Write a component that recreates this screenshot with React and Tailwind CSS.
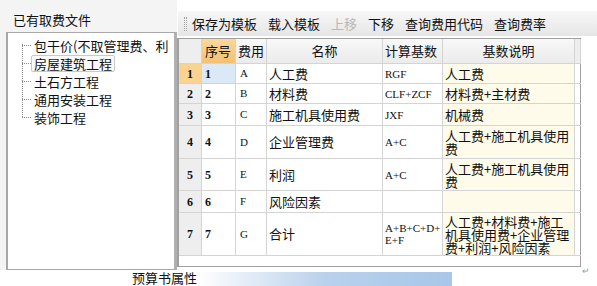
import React from 'react';

const cjk = { fontFamily: '"Noto Sans CJK SC", "Noto Sans", sans-serif' };
const code = { fontFamily: '"Liberation Serif", "DejaVu Serif", serif' };

const treeItems = ['包干价(不取管理费、利', '房屋建筑工程', '土石方工程', '通用安装工程', '装饰工程'];

const rows = [
  { n: '1', code: 'A', name: '人工费', base: ['RGF'], desc: '人工费', h: 'h-[20px]' },
  { n: '2', code: 'B', name: '材料费', base: ['CLF+ZCF'], desc: '材料费+主材费', h: 'h-[20px]' },
  { n: '3', code: 'C', name: '施工机具使用费', base: ['JXF'], desc: '机械费', h: 'h-[22px]' },
  { n: '4', code: 'D', name: '企业管理费', base: ['A+C'], desc: '人工费+施工机具使用费', h: 'h-[33px]' },
  { n: '5', code: 'E', name: '利润', base: ['A+C'], desc: '人工费+施工机具使用费', h: 'h-[32px]' },
  { n: '6', code: 'F', name: '风险因素', base: [''], desc: '', h: 'h-[22px]' },
  { n: '7', code: 'G', name: '合计', base: ['A+B+C+D+', 'E+F'], desc: '人工费+材料费+施工机具使用费+企业管理费+利润+风险因素', h: 'h-[43px]' },
];

const cell = 'border-r border-b border-[#d4d4d4] flex items-center overflow-hidden';

const App = () => {
  return (
    <div className="w-[597px] h-[286px] bg-white overflow-hidden text-[13px] text-[#111] flex flex-col" style={cjk}>
      <div className="flex h-[270px]">
        {/* left panel */}
        <div className="w-[177px] bg-[#f4f4f4] flex flex-col">
          <div className="pl-[13px] pt-[12px] h-[32px] leading-[16px]">已有取费文件</div>
          <div className="ml-[6px] flex-1 bg-white border border-[#a8a8a8] border-l-2 border-r-[3px] border-r-[#b0b0b0] relative pt-[3px]">
            <div className="absolute left-[14px] top-[11px] h-[73px] border-l border-dotted border-[#8a8a8a]" />
            {treeItems.map((t, i) => (
              <div key={t} className="flex items-center h-[18px] whitespace-nowrap">
                <div className="ml-[14px] w-[9px] border-t border-dotted border-[#8a8a8a]" />
                <span className={i === 1 ? 'px-[2px] border border-[#c8c8c8] rounded-[2px] leading-[15px] bg-[#fafafa]' : 'ml-[3px] leading-[15px]'}>{t}</span>
              </div>
            ))}
          </div>
        </div>

        {/* right panel */}
        <div className="flex-1 flex flex-col pt-[11px]">
          <div className="h-[25px] ml-[1px] bg-gradient-to-b from-[#f7f7f7] to-[#e6e6e6] flex items-center">
            <div className="ml-[6px] w-[3px] h-[14px] border-l border-r border-dotted border-[#a0a0a0]" />
            <div className="flex items-center ml-[5px] gap-[11px] whitespace-nowrap">
              <span>保存为模板</span>
              <span>载入模板</span>
              <span className="text-[#b8b8b8]">上移</span>
              <span>下移</span>
              <span>查询费用代码</span>
              <span>查询费率</span>
            </div>
          </div>
          <div className="mt-[2px] w-[404px] h-[229px] border border-[#a0a0a0] border-l-2 bg-white flex flex-col">
            <div className="grid grid-cols-[23px_34px_31px_116px_60px_132px_6px] h-[25px]">
              <div className={`${cell} bg-[#eeeeee]`} />
              <div className={`${cell} bg-gradient-to-b from-[#fbd89a] to-[#f3c172] pl-[3px]`}>序号</div>
              <div className={`${cell} bg-gradient-to-b from-[#f8f8f8] to-[#ebebeb] pl-[2px]`}>费用</div>
              <div className={`${cell} bg-gradient-to-b from-[#f8f8f8] to-[#ebebeb] justify-center`}>名称</div>
              <div className={`${cell} bg-gradient-to-b from-[#f8f8f8] to-[#ebebeb] pl-[2px]`}>计算基数</div>
              <div className={`${cell} bg-gradient-to-b from-[#f8f8f8] to-[#ebebeb] justify-center`}>基数说明</div>
              <div className={`${cell} bg-[#eeeeee]`} />
            </div>
            {rows.map((r, i) => (
              <div key={r.n} className={`grid grid-cols-[23px_34px_31px_116px_60px_132px_6px] ${r.h}`}>
                <div className={`${cell} justify-center text-[12px] font-bold ${i === 0 ? 'bg-[#f9d38f]' : 'bg-[#eeeeee]'}`} style={code}>{r.n}</div>
                <div className={`${cell} pl-[3px] text-[12px] font-bold ${i === 0 ? 'bg-[#dbe8f6]' : ''}`} style={code}>{r.n}</div>
                <div className={`${cell} pl-[4px] text-[11px]`} style={code}>{r.code}</div>
                <div className={`${cell} pl-[2px] whitespace-nowrap`}>{r.name}</div>
                <div className={`${cell} pl-[2px] text-[11px] leading-[12px]`} style={code}>
                  <div>{r.base.map((b) => <div key={b}>{b}</div>)}</div>
                </div>
                <div className={`${cell} pl-[2px] pr-[1px] bg-[#fffbea] leading-[13px]`}>{r.desc}</div>
                <div className="border-b border-[#d4d4d4]" />
              </div>
            ))}
          </div>
        </div>
      </div>

      {/* bottom strip */}
      <div className="flex-1 flex items-end relative">
        <span className="ml-[132px] leading-[16px]">预算书属性</span>
        <div className="h-[14px] w-[255px] bg-gradient-to-r from-[#ffffff] via-[#b9d1ec] to-[#a8c6e8]" />
        <span className="absolute left-[582px] top-[-6px] text-[9px] text-[#9a9a9a]">↵</span>
      </div>
    </div>
  );
};

export default App;
